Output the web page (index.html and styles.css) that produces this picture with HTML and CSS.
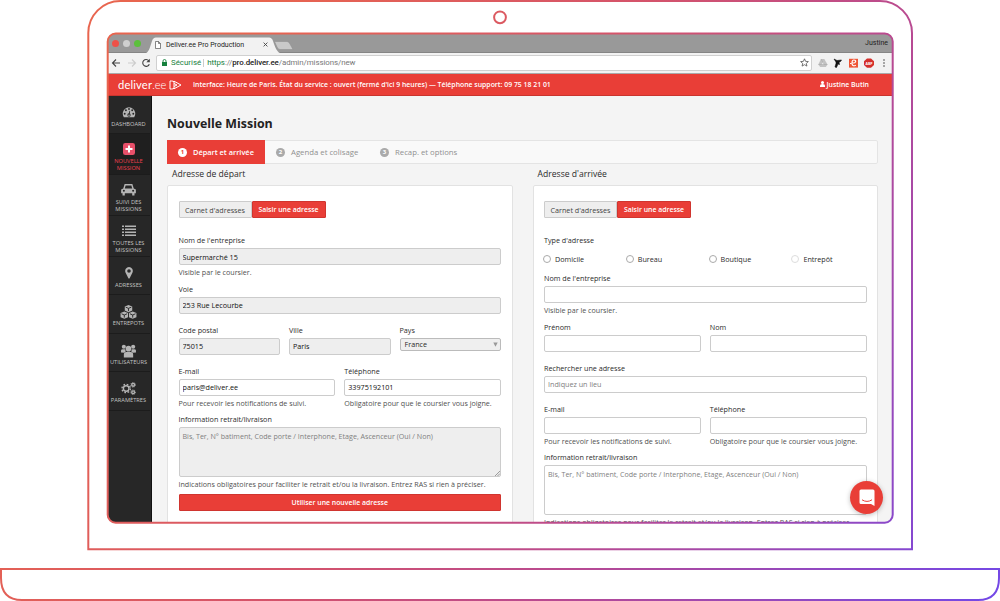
FILE: index.html
```html
<!DOCTYPE html>
<html lang="fr">
<head>
    <meta charset="UTF-8">
    <meta name="viewport" content="width=device-width, initial-scale=1.0">
    <title>Deliver.ee Pro Production</title>
    <link rel="stylesheet" href="styles.css">
</head>
<body>
<div class="laptop">
    <div class="screen">
        <div class="tabbar">
            <span class="dot red"></span>
            <span class="dot grey"></span>
            <span class="dot green"></span>
            <div class="tab">
                <svg class="tab-shape" viewBox="0 0 150 16" width="150" height="16"><path d="M0 16 C3 15 4 10 6 4 Q7 .5 10 .5 H123 Q126 .5 127 4 C129 10 131 15 134 16 Z" fill="#f2f2f2"/><path d="M128.500 4.500 H141 Q143 4.500 144 7 L147 12.500 H134 Q132 12.500 131 10 Z" fill="#c9c9c9" stroke="#8a8a8a" stroke-width=".5"/></svg>
                <svg class="tab-file" viewBox="0 0 6 8" width="6" height="8"><path d="M.5.5H3.500L5.500 2.500V7.500H.5ZM3.500.5V2.500H5.500" fill="#fff" stroke="#555" stroke-width=".7"/></svg>
                <span class="tab-title">Deliver.ee Pro Production</span>
                <svg class="tab-close" viewBox="0 0 5 5" width="5" height="5"><path d="M.6.600 4.400 4.400M4.400.600.600 4.400" stroke="#444" stroke-width=".9"/></svg>
            </div>
            <span class="profile">Justine</span>
        </div>

        <div class="toolbar">
            <svg class="nav-icons" viewBox="0 0 44 12" width="44" height="12" fill="none" stroke-width="1.100">
                <path d="M9 6H1.500M5 2.500 1.500 6 5 9.500" stroke="#444"/>
                <path d="M17 6H24.500M21 2.500 24.500 6 21 9.500" stroke="#ccc"/>
                <path d="M37.800 3.800A3.400 3.400 0 1 0 38.300 7.200" stroke="#444"/>
                <path d="M38.800 1.800V5.300H35.300Z" fill="#444"/>
            </svg>
            <div class="url">
                <svg viewBox="0 0 5 7" width="5" height="7"><path d="M0 3H5V7H0Z" fill="#15803c"/><path d="M1 3V2A1.500 1.500 0 0 1 4 2V3" fill="none" stroke="#15803c" stroke-width=".9"/></svg>
                <span class="secure">Sécurisé</span>
                <span class="sep"></span>
                <span class="address"><span class="https">https</span>://<b>pro.deliver.ee</b>/admin/missions/new</span>
                <svg class="star" viewBox="0 0 10 10" width="9" height="9"><path d="M5 .9 6.200 3.700 9.300 4 7 6 7.700 9 5 7.400 2.300 9 3 6 .7 4 3.800 3.700Z" fill="none" stroke="#555" stroke-width=".9"/></svg>
            </div>
            <svg class="extensions" viewBox="0 0 80 12" width="80" height="12">
                <path d="M9 2H12.300L15.500 7.500 13.800 10H8.200L6.300 7.500Z" fill="#c2c2c2"/><path d="M11 5 12.400 7.500H9.600Z" fill="#eee"/><path d="M9 2 12 7.500H15.500M6.300 7.500H12" stroke="#999" stroke-width=".4" fill="none"/>
                <path d="M22 2 25 3.500 29.500 3 28.500 4.500 27 5.300 27.500 7.500 26 7 24.500 10.500 23 10 24 6.500 24 5Z" fill="#111" stroke="#111" stroke-width=".6"/>
                <rect x="37" y="1.800" width="9" height="8.800" fill="#ee5434"/><path d="M43.800 8.200Q40 10 40 6T43 3.300Q44.500 4.300 42.700 5.800L38 6.500" fill="none" stroke="#fff" stroke-width="1.200"/>
                <path d="M55 1.500H59L62 4.300V8L59 10.800H55L52 8V4.300Z" fill="#d42f2b"/><text x="57" y="7.600" class="abp">ABP</text>
                <circle cx="72" cy="3" r=".8" fill="#444"/><circle cx="72" cy="6" r=".8" fill="#444"/><circle cx="72" cy="9" r=".8" fill="#444"/>
            </svg>
        </div>

        <header class="header">
            <span class="logo"><b>deliver</b>.ee</span>
            <svg viewBox="0 0 13 10" width="13" height="10" fill="none" stroke="#fff" stroke-width="1" stroke-linejoin="round"><path d="M5 1.700Q4 1 2.500 1H1V9H2.500Q4 9 5 8.300M5 1.200 12 5 5 8.800ZM5 3.500 8 5 5 6.500"/></svg>
            <span class="status">Interface: Heure de Paris. État du service : ouvert (fermé d'ici 9 heures) — Téléphone support: 09 75 18 21 01</span>
            <span class="user"><svg viewBox="0 0 5 6" width="5" height="6"><circle cx="2.500" cy="1.600" r="1.500"/><path d="M0 6V4.500Q0 3 2.500 3T5 4.500V6Z"/></svg>Justine Butin</span>
        </header>

        <div class="content">
            <nav class="sidebar">
                <a class="item first">
                    <svg viewBox="0 0 16 14" width="14" height="12"><path d="M2 13A7.300 7.300 0 1 1 14 13Z"/><g fill="#272727"><circle cx="3" cy="9" r="1.100"/><circle cx="4.400" cy="5" r="1.100"/><circle cx="8" cy="3.500" r="1.100"/><circle cx="11.700" cy="5" r="1.100"/><circle cx="13" cy="9" r="1.100"/><circle cx="8" cy="10.500" r="1.900"/><path d="M7.500 10 8.600 5.500 9.300 5.700 8.700 10.500Z"/></g><circle cx="8" cy="10.700" r=".9"/></svg>
                    <span>DASHBOARD</span>
                </a>
                <a class="item two active">
                    <svg viewBox="0 0 12 12" width="12" height="12"><rect width="12" height="12" rx="2.300"/><path d="M5 2.500H7V5H9.500V7H7V9.500H5V7H2.500V5H5Z" fill="#fff"/></svg>
                    <span>NOUVELLE<br>MISSION</span>
                </a>
                <a class="item two">
                    <svg viewBox="0 0 16 13" width="15" height="12"><path d="M3.800 0H12.200L13.700 5 16 6V10H14.500V12.500H12V10H4V12.500H1.500V10H0V6L2.300 5Z"/><path d="M4.900 1.600H11.100L12 4.800H4Z" fill="#272727"/><circle cx="3" cy="7.400" r="1.100" fill="#272727"/><circle cx="13" cy="7.400" r="1.100" fill="#272727"/></svg>
                    <span>SUIVI DES<br>MISSIONS</span>
                </a>
                <a class="item two">
                    <svg viewBox="0 0 14 12" width="14" height="12"><path d="M0 .5H2V2H0ZM3 .5H14V2H3ZM0 3.500H2V5H0ZM3 3.500H14V5H3ZM0 6.500H2V8H0ZM3 6.500H14V8H3ZM0 9.500H2V11H0ZM3 9.500H14V11H3Z"/></svg>
                    <span>TOUTES LES<br>MISSIONS</span>
                </a>
                <a class="item">
                    <svg viewBox="0 0 8 12" width="8" height="12"><path fill-rule="evenodd" d="M4 0A4 4 0 0 1 7.500 5.500L4.500 11.500H3.500L.5 5.500A4 4 0 0 1 4 0ZM4 2.200A1.800 1.800 0 1 0 4 5.800 1.800 1.800 0 0 0 4 2.200Z"/></svg>
                    <span>ADRESSES</span>
                </a>
                <a class="item">
                    <svg viewBox="0 0 18 15" width="17" height="14"><path d="M9 0 13 1.700V6L9 7.800 5 6V1.700ZM4.500 7 8.500 8.700V13L4.500 14.800.5 13V8.700ZM13.500 7 17.500 8.700V13L13.500 14.800 9.500 13V8.700Z"/><path d="M6 2.300 9 3.600 12 2.300M9 3.600V6.500M1.500 9.400 4.500 10.700 7.500 9.400M4.500 10.700V13.500M10.500 9.400 13.500 10.700 16.500 9.400M13.500 10.700V13.500" fill="none" stroke="#272727" stroke-width="1"/></svg>
                    <span>ENTREPOTS</span>
                </a>
                <a class="item">
                    <svg viewBox="0 0 16 15" width="15" height="14"><circle cx="3" cy="3" r="2.200"/><circle cx="13" cy="3" r="2.200"/><path d="M0 9V7Q0 5.500 2 5.500H4.500L5 8 3.500 9.500ZM16 9V7Q16 5.500 14 5.500H11.500L11 8 12.500 9.500Z"/><circle cx="8" cy="5" r="3"/><path d="M3 14.500V11.500Q3 8.500 5.500 8.500H10.500Q13 8.500 13 11.500V14.500Z"/></svg>
                    <span>UTILISATEURS</span>
                </a>
                <a class="item">
                    <svg viewBox="0 0 16 14" width="15" height="13" class="gears"><circle cx="5.500" cy="7" r="3"/><circle cx="5.500" cy="7" r="4.500" stroke-dasharray="1.800 1.734"/><circle cx="13" cy="3" r="1.500"/><circle cx="13" cy="3" r="2.500" stroke-dasharray="1 .963" class="teeth"/><circle cx="13" cy="11" r="1.500"/><circle cx="13" cy="11" r="2.500" stroke-dasharray="1 .963" class="teeth"/></svg>
                    <span>PARAMÈTRES</span>
                </a>
            </nav>

            <main class="main">
                <h1>Nouvelle Mission</h1>
                <ol class="steps">
                    <li class="step current"><i>1</i>Départ et arrivée</li>
                    <li class="step second"><i>2</i>Agenda et colisage</li>
                    <li class="step third"><i>3</i>Recap. et options</li>
                </ol>

                <div class="columns">
                    <section>
                        <h2>Adresse de départ</h2>
                        <form class="panel">
                            <div class="btn-group">
                                <button type="button" class="btn">Carnet d'adresses</button>
                                <button type="button" class="btn primary">Saisir une adresse</button>
                            </div>
                            <div class="field">
                                <label>Nom de l'entreprise</label>
                                <input type="text" value="Supermarché 15" readonly>
                                <p class="help">Visible par le coursier.</p>
                            </div>
                            <div class="field gap">
                                <label>Voie</label>
                                <input type="text" value="253 Rue Lecourbe" readonly>
                            </div>
                            <div class="row thirds">
                                <div class="field gap"><label>Code postal</label><input type="text" value="75015" readonly></div>
                                <div class="field gap"><label>Ville</label><input type="text" value="Paris" readonly></div>
                                <div class="field gap"><label>Pays</label><div class="select">France<svg viewBox="0 0 5 5" width="5" height="5"><path d="M.3.500H4.700L2.500 4.800Z" fill="#999"/></svg></div></div>
                            </div>
                            <div class="row">
                                <div class="field"><label>E-mail</label><input type="text" value="paris@deliver.ee"><p class="help">Pour recevoir les notifications de suivi.</p></div>
                                <div class="field"><label>Téléphone</label><input type="text" value="33975192101"><p class="help">Obligatoire pour que le coursier vous joigne.</p></div>
                            </div>
                            <div class="field">
                                <label>Information retrait/livraison</label>
                                <div class="area">
                                    <textarea placeholder="Bis, Ter, N° batiment, Code porte / Interphone, Etage, Ascenceur (Oui / Non)" readonly></textarea>
                                    <svg class="grip" viewBox="0 0 5 5" width="5" height="5"><path d="M0 5 5 0M2.500 5 5 2.500" stroke="#777" stroke-width=".7"/></svg>
                                </div>
                                <p class="help">Indications obligatoires pour faciliter le retrait et/ou la livraison. Entrez RAS si rien à préciser.</p>
                            </div>
                            <button type="button" class="btn primary wide">Utiliser une nouvelle adresse</button>
                        </form>
                    </section>

                    <section>
                        <h2>Adresse d'arrivée</h2>
                        <form class="panel">
                            <div class="btn-group">
                                <button type="button" class="btn">Carnet d'adresses</button>
                                <button type="button" class="btn primary">Saisir une adresse</button>
                            </div>
                            <label>Type d'adresse</label>
                            <div class="radios">
                                <label><input type="radio" name="type">Domicile</label>
                                <label><input type="radio" name="type">Bureau</label>
                                <label><input type="radio" name="type">Boutique</label>
                                <label><input type="radio" name="type" disabled>Entrepôt</label>
                            </div>
                            <div class="field">
                                <label>Nom de l'entreprise</label>
                                <input type="text">
                                <p class="help">Visible par le coursier.</p>
                            </div>
                            <div class="row">
                                <div class="field gap"><label>Prénom</label><input type="text"></div>
                                <div class="field gap"><label>Nom</label><input type="text"></div>
                            </div>
                            <div class="field gap">
                                <label>Rechercher une adresse</label>
                                <input type="text" placeholder="Indiquez un lieu">
                            </div>
                            <div class="row">
                                <div class="field"><label>E-mail</label><input type="text"><p class="help">Pour recevoir les notifications de suivi.</p></div>
                                <div class="field"><label>Téléphone</label><input type="text"><p class="help">Obligatoire pour que le coursier vous joigne.</p></div>
                            </div>
                            <div class="field">
                                <label>Information retrait/livraison</label>
                                <div class="area"><textarea placeholder="Bis, Ter, N° batiment, Code porte / Interphone, Etage, Ascenceur (Oui / Non)"></textarea></div>
                                <p class="help">Indications obligatoires pour faciliter le retrait et/ou la livraison. Entrez RAS si rien à préciser.</p>
                            </div>
                        </form>
                    </section>
                </div>
            </main>
        </div>

        <div class="chat">
            <svg viewBox="0 0 16 18" width="16" height="18"><path d="M2 .5H14Q15.500.5 15.500 2V17L12 15H2Q.5 15 .5 13.500V2Q.5.500 2 .5Z" fill="#fff"/><path d="M3 10.800Q8 14 13 10.800" fill="none" stroke="#e93e37" stroke-width="1"/></svg>
        </div>
    </div>

    <!-- laptop outline -->
    <svg class="frame" viewBox="0 0 1000 601" width="1000" height="601">
        <defs>
            <linearGradient id="edge" gradientUnits="userSpaceOnUse" x1="200" y1="100" x2="1000" y2="600">
                <stop offset="0" stop-color="#e8654f"/>
                <stop offset=".35" stop-color="#d4536b"/>
                <stop offset=".6" stop-color="#b84a92"/>
                <stop offset="1" stop-color="#7248e8"/>
            </linearGradient>
        </defs>
        <g fill="none" stroke="url(#edge)" stroke-width="2">
            <path d="M88.300 549.300V33A32 32 0 0 1 120.300 1H880A32 32 0 0 1 912 33V549.300Z"/>
            <rect x="107.700" y="33.500" width="785" height="489.200" rx="8"/>
            <circle cx="500" cy="17.300" r="5.900"/>
            <path d="M1 569H999V578Q999 600 978 600H22Q1 600 1 578Z"/>
        </g>
    </svg>
</div>
</body>
</html>
```
FILE: styles.css
```css
* {
    box-sizing: border-box;
}
body {
    margin: 0;
    background: #fff;
    font-family: "Open Sans", sans-serif;
    font-size: 7.2px;
    color: #2b2b2b;
}
.laptop {
    position: relative;
    width: 1000px;
    height: 601px;
    padding: 33px 107px 0;
    overflow: hidden;
}
.frame {
    position: absolute;
    left: 0;
    top: 0;
    pointer-events: none;
}
.screen {
    position: relative;
    width: 786px;
    height: 490px;
    border-radius: 9px;
    overflow: hidden;
    background: #f4f4f4;
}

/* browser window */
.tabbar {
    display: flex;
    align-items: center;
    height: 20px;
    padding: 1px 5px 0;
    background: #999;
    border-bottom: 1px solid #858585;
    font-family: Roboto, sans-serif;
    font-size: 7px;
    color: #222;
}
.dot {
    width: 7px;
    height: 7px;
    margin-right: 4px;
    border-radius: 50%;
}
.dot.red {
    background: #ee5048;
}
.dot.grey {
    background: #cfcfcf;
}
.dot.green {
    background: #5cc03c;
}
.tab {
    position: relative;
    display: flex;
    align-items: center;
    width: 150px;
    height: 16px;
    margin: 3px 0 0 1px;
    padding-left: 9px;
}
.tab-shape {
    position: absolute;
    left: 0;
    top: 0;
}
.tab-file,
.tab-title,
.tab-close {
    position: relative;
}
.tab-title {
    width: 97px;
    margin-left: 5px;
    white-space: nowrap;
}
.profile {
    margin-left: auto;
}
.toolbar {
    display: flex;
    align-items: center;
    height: 21px;
    padding: 0 0 1px 4px;
    background: #f2f2f2;
    border-bottom: 1px solid #a9a9a9;
}
.url {
    display: flex;
    align-items: center;
    width: 656px;
    height: 16px;
    margin-left: 1px;
    padding: 0 2px 0 5px;
    background: #fff;
    border: 1px solid #d0d0d0;
    border-radius: 2px;
    font-family: Roboto, sans-serif;
    font-size: 7.9px;
}
.secure {
    margin-left: 4px;
    color: #15803c;
}
.sep {
    width: 1px;
    height: 8px;
    margin: 0 3px 0 2px;
    background: #ccc;
}
.address {
    color: #777;
    letter-spacing: -.07px;
}
.address b {
    font-weight: 500;
    color: #222;
}
.https {
    color: #15803c;
}
.star {
    margin-left: auto;
}
.abp {
    font: bold 3.5px "Open Sans", sans-serif;
    fill: #fff;
    text-anchor: middle;
}

/* application header */
.header {
    display: flex;
    align-items: center;
    height: 22px;
    padding: 0 24px 0 11px;
    background: #e93e37;
    border-bottom: 1px solid #c9342e;
    color: #fff;
    font-weight: 600;
    font-size: 6.9px;
}
.logo {
    width: 51px;
    font-family: Lato, sans-serif;
    font-size: 11.2px;
    font-weight: 300;
}
.logo b {
    font-weight: 400;
    letter-spacing: .15px;
}
.status {
    margin-left: 11px;
}
.user {
    margin-left: auto;
}
.user svg {
    margin-right: 1px;
    fill: #fff;
}
.content {
    display: flex;
    height: 427px;
}
.sidebar {
    width: 44.5px;
    flex: none;
    background: #272727;
    border-right: 1px solid #111;
}
.item {
    display: flex;
    flex-direction: column;
    align-items: center;
    justify-content: space-between;
    width: 43px;
    height: 38.5px;
    padding: 10px 0 5.5px;
    border-bottom: 1px solid #1c1c1c;
    color: #c4c4c4;
    fill: #b4b4b4;
    font-size: 5.7px;
    line-height: 7px;
    text-align: center;
    white-space: nowrap;
}
.item svg {
    flex: none;
}
.item.first {
    height: 37.5px;
    padding-bottom: 5px;
}
.item.two {
    height: 41px;
    padding: 9.5px 0 2px;
}
.item.active {
    background: #1f1f1f;
    color: #f0404f;
    fill: #e8506a;
}
.gears {
    fill: none;
    stroke: #b4b4b4;
    stroke-width: 1.5;
}
.teeth {
    stroke-width: 1;
}

/* mission form */
.main {
    width: 711px;
    margin-left: 15.5px;
    flex: none;
}
h1 {
    height: 44px;
    margin: 0;
    padding-top: 18px;
    font-size: 12.4px;
    line-height: 19px;
    color: #222;
}
.steps {
    display: flex;
    height: 24px;
    margin: 0;
    padding: 0;
    list-style: none;
    background: #f9f9f9;
    border: 1px solid #e4e4e4;
    border-radius: 2px;
}
.step {
    display: flex;
    align-items: center;
    color: #909090;
    font-size: 7.75px;
}
.step i {
    width: 9px;
    height: 9px;
    margin-right: 6px;
    border-radius: 50%;
    background: #aaa;
    color: #fff;
    font: bold 6px/9px "Open Sans", sans-serif;
    text-align: center;
}
.step.current {
    width: 98px;
    margin: -1px 0 -1px -1px;
    padding-left: 11px;
    background: #e93e37;
    color: #fff;
    font-size: 7.4px;
    font-weight: 600;
}
.step.current i {
    background: #fff;
    color: #e93e37;
}
.step.second {
    width: 104px;
    padding-left: 11px;
}
.step.third {
    padding-left: 11px;
}
.columns {
    display: grid;
    grid-template-columns: 345.5px 345.5px;
    column-gap: 20px;
}
h2 {
    height: 21px;
    margin: 0;
    padding-left: 5px;
    font-size: 8.6px;
    font-weight: 400;
    line-height: 21px;
}
.panel {
    height: 360px;
    padding: 15px 10.5px 0;
    background: #fff;
    border: 1px solid #e2e2e2;
    border-radius: 2px;
}
.btn-group {
    display: flex;
    height: 31.1px;
}
.btn {
    width: 73px;
    height: 17px;
    padding: 0;
    background: #eee;
    border: 1px solid #ccc;
    border-radius: 1px;
    color: #444;
    font: 7.2px "Open Sans", sans-serif;
}
.btn.primary {
    width: 74px;
    background: #e93e37;
    border-color: #d0352f;
    color: #fff;
    font-size: 6.9px;
    font-weight: 600;
}
.btn.wide {
    display: block;
    width: 100%;
    margin-top: 2px;
}
label {
    display: block;
    height: 16px;
    line-height: 16px;
    white-space: nowrap;
}
.field.gap {
    margin-bottom: 8px;
}
.help {
    height: 15.5px;
    margin: 0;
    line-height: 15.5px;
    color: #505050;
    font-size: 7.15px;
    white-space: nowrap;
}
input[type="text"],
textarea {
    display: block;
    width: 100%;
    height: 17px;
    padding: 0 3px;
    background: #fff;
    border: 1px solid #ccc;
    border-radius: 2px;
    color: #111;
    font: 7.2px "Open Sans", sans-serif;
    outline: none;
}
textarea {
    height: 49.5px;
    padding-top: 3px;
    font-size: 7.12px;
    resize: none;
    overflow: hidden;
}
input[readonly],
textarea[readonly] {
    background: #eee;
}
::placeholder {
    color: #808080;
}
.row {
    display: grid;
    grid-template-columns: 1fr 1fr;
    column-gap: 9px;
}
.row.thirds {
    grid-template-columns: 1fr 1fr 1fr;
}
.select {
    display: flex;
    align-items: center;
    justify-content: space-between;
    height: 13px;
    padding: 0 2px 0 4px;
    background: #efefef;
    border: 1px solid #bbb;
    border-radius: 2px;
}
.area {
    position: relative;
}
.grip {
    position: absolute;
    right: 1px;
    bottom: 1px;
}
.radios {
    display: grid;
    grid-template-columns: repeat(4, 82.8px);
    height: 22.3px;
    padding-top: 3px;
}
.radios label {
    display: flex;
    align-items: center;
}
.radios input {
    appearance: none;
    width: 8px;
    height: 8px;
    margin: 0 4px 0 -1px;
    background: #fff;
    border: 1px solid #aaa;
    border-radius: 50%;
}
.radios input:disabled {
    border-color: #ddd;
}

/* chat launcher */
.chat {
    position: absolute;
    right: 10px;
    bottom: 9px;
    display: flex;
    align-items: center;
    justify-content: center;
    width: 33px;
    height: 33px;
    border-radius: 50%;
    background: #e93e37;
    box-shadow: 0 1px 5px rgba(0, 0, 0, .25);
}
```
